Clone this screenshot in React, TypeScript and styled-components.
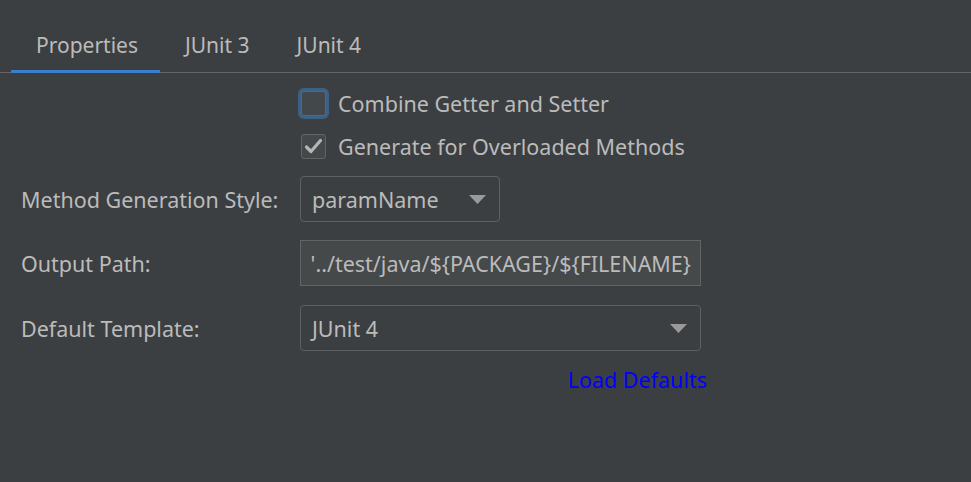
import { createGlobalStyle } from 'styled-components'
import styled from 'styled-components'
import { useState } from 'react'

const GlobalStyle = createGlobalStyle`
  html, body {
    margin: 0;
    padding: 0;
    background: #3c3f41;
  }
  body {
    font-family: 'Noto Sans', 'Open Sans', sans-serif;
    font-size: 21.5px;
    color: #bbbbbb;
  }
`

const Page = styled.div`
  width: 971px;
  height: 482px;
  background: #3c3f41;
  overflow: hidden;
`

const TabBar = styled.div`
  display: flex;
  padding: 22px 0 0 11px;
  border-bottom: 1px solid #656565;
`

const Tab = styled.div<{ $active?: boolean }>`
  height: 51px;
  padding: 0 22px 3px 25px;
  display: flex;
  align-items: center;
  box-sizing: border-box;
  font-size: 21px;
  border-bottom: 3px solid ${({ $active }) => ($active ? '#3d7fcf' : 'transparent')};
  margin-bottom: -1px;
  cursor: default;
`

const Form = styled.div`
  display: grid;
  grid-template-columns: 279px 401px;
  align-items: center;
  padding: 8px 0 0 21px;
`

const Label = styled.div<{ $height?: number }>`
  height: ${({ $height }) => $height ?? 64}px;
  display: flex;
  align-items: center;
`

const CheckRow = styled.label<{ $height: number }>`
  grid-column: 2;
  display: flex;
  align-items: center;
  gap: 12px;
  height: ${({ $height }) => $height}px;
  padding-left: 1px;
`

const Box = styled.span<{ $focused?: boolean }>`
  width: 25px;
  height: 25px;
  box-sizing: border-box;
  border: 1px solid #646464;
  border-radius: 3px;
  background: #43494a;
  display: flex;
  align-items: center;
  justify-content: center;
  box-shadow: ${({ $focused }) => ($focused ? '0 0 0 3px #3d6185' : 'none')};
  flex: none;
`

const Select = styled.div<{ $width: number }>`
  width: ${({ $width }) => $width}px;
  height: 46px;
  box-sizing: border-box;
  border: 1px solid #5e6060;
  border-radius: 4px;
  display: flex;
  align-items: center;
  justify-content: space-between;
  padding: 0 13px 0 11px;
`

const TextField = styled.div`
  width: 401px;
  height: 46px;
  box-sizing: border-box;
  border: 1px solid #646464;
  background: #45494a;
  display: flex;
  align-items: center;
  justify-content: flex-end;
  padding: 0 9px 0 8px;
  overflow: hidden;
  white-space: nowrap;
`

const Control = styled.div`
  grid-column: 2;
  display: flex;
`

const LinkRow = styled.div`
  grid-column: 2;
  display: flex;
  justify-content: flex-end;
  margin-right: -6px;
  height: 36px;
  align-items: center;
`

const Link = styled.a`
  color: #0000ff;
  text-decoration: none;
  cursor: pointer;
`

const Arrow = () => (
  <svg width="17" height="9" viewBox="0 0 17 9">
    <path d="M0 0 H17 L8.5 9 Z" fill="#9a9a9a" />
  </svg>
)

const Check = () => (
  <svg width="19" height="17" viewBox="0 0 19 17">
    <path d="M2.5 9 L7 13.5 L16.5 2.5" fill="none" stroke="#b5b5b5" strokeWidth="3.2" strokeLinecap="round" strokeLinejoin="round" />
  </svg>
)

const tabs = ['Properties', 'JUnit 3', 'JUnit 4']

export default function App() {
  const [active, setActive] = useState(0)
  return (
    <Page>
      <GlobalStyle />
      <TabBar>
        {tabs.map((t, i) => (
          <Tab key={t} $active={i === active} onClick={() => setActive(i)}>
            {t}
          </Tab>
        ))}
      </TabBar>
      <Form>
        <CheckRow $height={44}>
          <Box $focused />
          Combine Getter and Setter
        </CheckRow>
        <CheckRow $height={42}>
          <Box>
            <Check />
          </Box>
          Generate for Overloaded Methods
        </CheckRow>
        <Label>Method Generation Style:</Label>
        <Control>
          <Select $width={200}>
            paramName
            <Arrow />
          </Select>
        </Control>
        <Label>Output Path:</Label>
        <Control>
          <TextField>'../test/java/${'{'}PACKAGE{'}'}/${'{'}FILENAME{'}'}</TextField>
        </Control>
        <Label $height={66}>Default Template:</Label>
        <Control>
          <Select $width={401}>
            JUnit 4
            <Arrow />
          </Select>
        </Control>
        <LinkRow>
          <Link>Load Defaults</Link>
        </LinkRow>
      </Form>
    </Page>
  )
}
